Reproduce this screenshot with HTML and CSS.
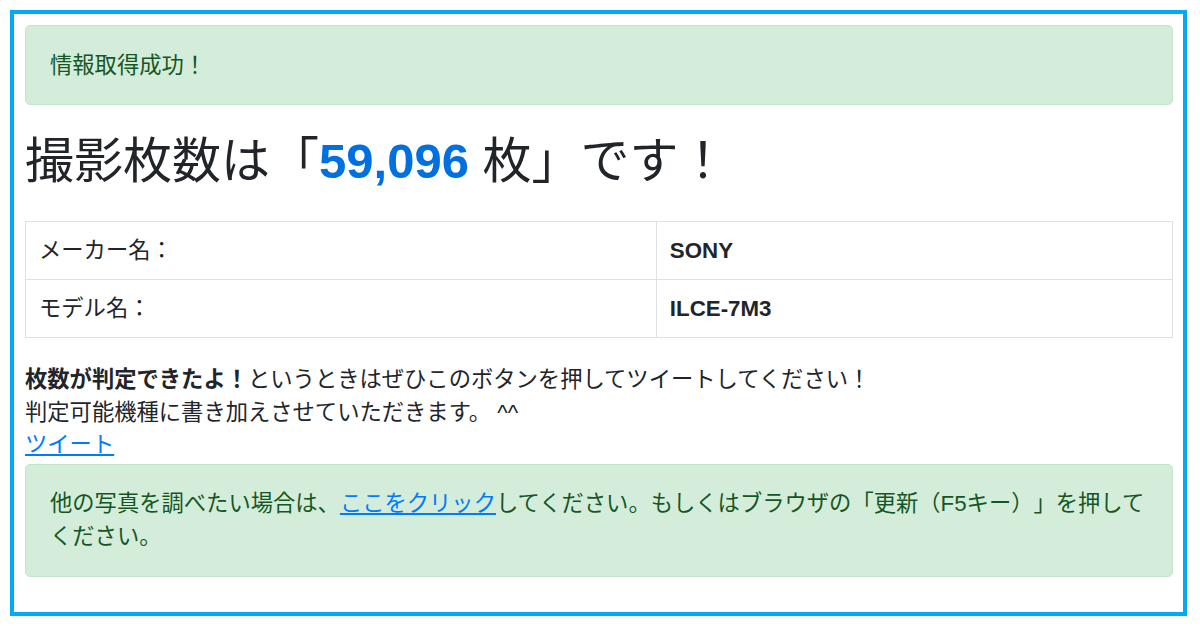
FILE: index.html
```html
<!DOCTYPE html>
<html lang="ja">
<head>
<meta charset="utf-8">
<title>撮影枚数</title>
<link rel="stylesheet" href="styles.css">
</head>
<body>
<div class="frame">
  <div class="alert alert-top">情報取得成功！</div>
  <h1 class="headline">撮影枚数は「<span class="count">59,096</span> 枚」です！</h1>
  <table class="info">
    <tr>
      <td class="label">メーカー名：</td>
      <td class="value">SONY</td>
    </tr>
    <tr>
      <td class="label">モデル名：</td>
      <td class="value">ILCE-7M3</td>
    </tr>
  </table>
  <p class="note"><strong>枚数が判定できたよ！</strong>というときはぜひこのボタンを押してツイートしてください！<br>判定可能機種に書き加えさせていただきます。 ^^<br><a href="#" class="link">ツイート</a></p>
  <div class="alert alert-bottom">他の写真を調べたい場合は、<a href="#" class="link">ここをクリック</a>してください。もしくはブラウザの「更新（F5キー）」を押してください。</div>
</div>
</body>
</html>
```

FILE: styles.css
```css
html, body {
  margin: 0;
  padding: 0;
  background: #ffffff;
}

body {
  font-family: "Liberation Sans", "Noto Sans CJK JP", sans-serif;
  font-size: 22.3px;
  line-height: 32px;
  color: #212529;
  text-spacing-trim: space-all;
}

.frame {
  box-sizing: border-box;
  height: 606px;
  margin: 10px 13px 10px 10px;
  border: 4px solid #03a9f4;
  padding: 11px 10px 0 11px;
  overflow: hidden;
}

.alert {
  background: #d4edda;
  border: 1px solid #c3e6cb;
  border-radius: 5px;
  color: #155724;
  padding: 22.5px 20px 22.5px 24px;
  line-height: 33px;
}

.alert-top {
  margin: 0 0 26px 0;
}

.alert-bottom {
  margin: 0;
}

.headline {
  margin: 0 0 30px 0;
  font-size: 49px;
  line-height: 60px;
  font-weight: 400;
  color: #212529;
}

.count {
  color: #0070e0;
  font-weight: 700;
}

.info {
  width: 100%;
  border-collapse: collapse;
  margin: 0 0 26px 0;
}

.info td {
  border: 1px solid #dee2e6;
  padding: 13px 14px 12px 13px;
  line-height: 32px;
  vertical-align: top;
}

.info .label {
  width: 55%;
}

.info .value {
  font-weight: 700;
}

.note {
  margin: 0 0 2px 0;
  line-height: 32.5px;
}

.note strong {
  font-weight: 700;
}

.link {
  color: #007bff;
  text-decoration: underline;
}
```
